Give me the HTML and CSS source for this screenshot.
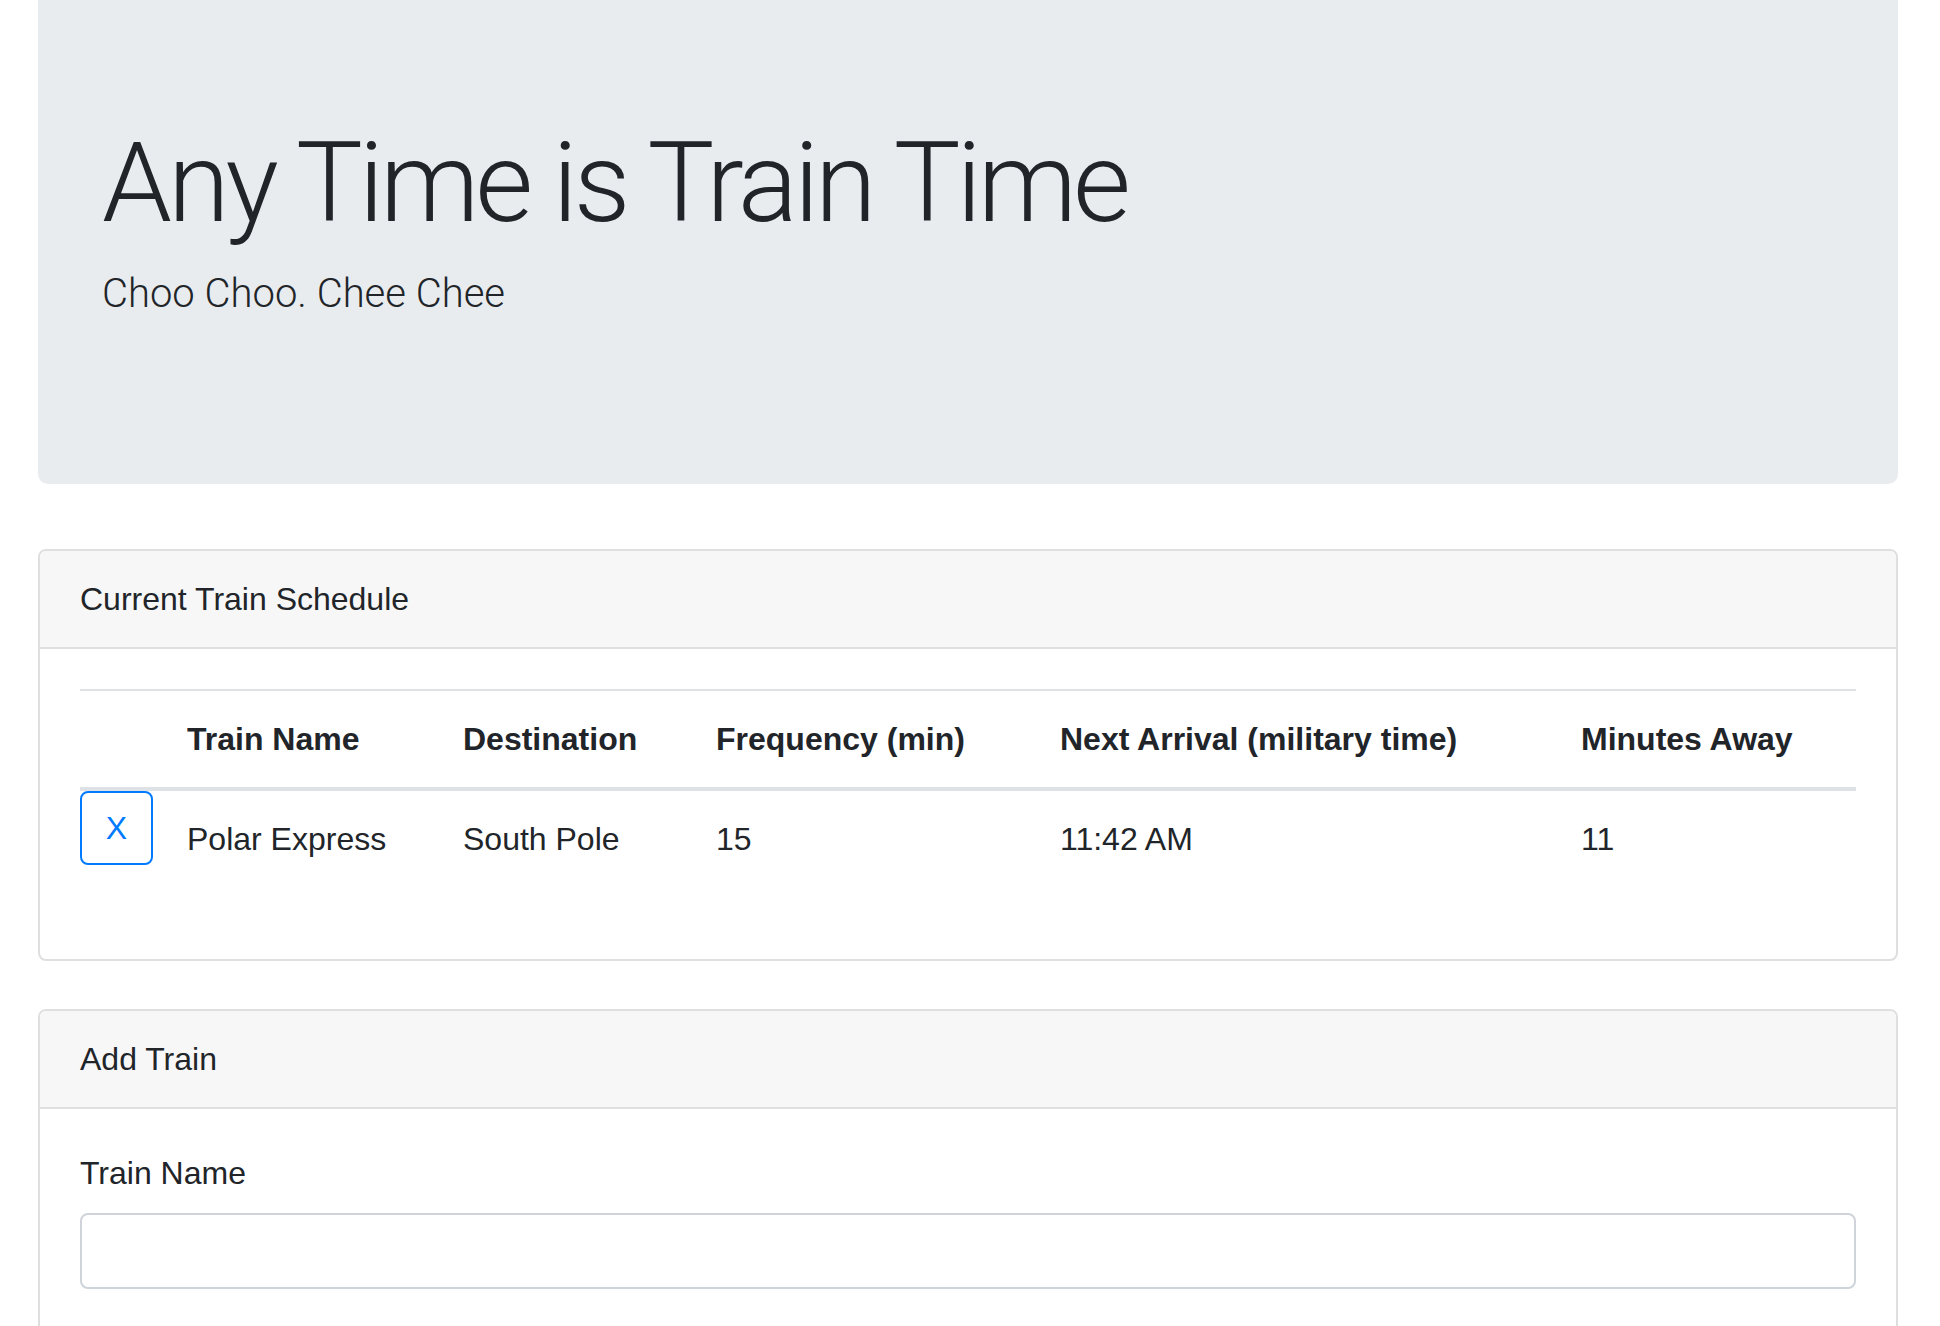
FILE: index.html
```html
<!DOCTYPE html>
<html lang="en">
<head>
<meta charset="utf-8">
<title>Train Scheduler</title>
<link rel="stylesheet" href="styles.css">
</head>
<body>
<div class="container">
  <div class="jumbotron">
    <h1 class="display">Any Time is Train Time</h1>
    <p class="lead">Choo Choo. Chee Chee</p>
  </div>

  <div class="card">
    <div class="card-header">Current Train Schedule</div>
    <div class="card-body">
      <table class="table">
        <colgroup>
          <col class="c1"><col class="c2"><col class="c3"><col class="c4"><col class="c5"><col class="c6">
        </colgroup>
        <thead>
          <tr>
            <th></th>
            <th>Train Name</th>
            <th>Destination</th>
            <th>Frequency (min)</th>
            <th>Next Arrival (military time)</th>
            <th>Minutes Away</th>
          </tr>
        </thead>
        <tbody>
          <tr>
            <td class="btn-cell"><button class="btn-outline" type="button">X</button></td>
            <td>Polar Express</td>
            <td>South Pole</td>
            <td>15</td>
            <td>11:42 AM</td>
            <td>11</td>
          </tr>
        </tbody>
      </table>
    </div>
  </div>

  <div class="card card-add">
    <div class="card-header">Add Train</div>
    <div class="card-body">
      <div class="form-group">
        <label class="form-label" for="train-name">Train Name</label>
        <input class="form-control" id="train-name" type="text">
      </div>
    </div>
  </div>
</div>
</body>
</html>
```

FILE: styles.css
```css
* { box-sizing: border-box; }

html, body {
  margin: 0;
  padding: 0;
  background: #fff;
}

body {
  font-family: "Liberation Sans", Arial, sans-serif;
  font-size: 32px;
  line-height: 48px;
  color: #212529;
}

.container {
  padding: 0 42px 0 38px;
}

.jumbotron {
  background: #e9ecef;
  padding: 116px 64px 128px;
  border-radius: 0 0 10px 10px;
  margin-bottom: 65px;
}

.display {
  font-family: Roboto, "Liberation Sans", sans-serif;
  font-weight: 300;
  font-size: 112px;
  line-height: 134.4px;
  letter-spacing: -4px;
  margin: 0 0 14px;
}

.lead {
  font-family: Roboto, "Liberation Sans", sans-serif;
  font-weight: 300;
  font-size: 40px;
  line-height: 60px;
  letter-spacing: 0;
  margin: 0 0 32px;
}

.card {
  border: 2px solid #dfdfdf;
  border-radius: 8px;
  background: #fff;
  overflow: hidden;
}

.card-add {
  margin-top: 48px;
}

.card-header {
  background: #f7f7f7;
  padding: 24px 40px;
  border-bottom: 2px solid #dfdfdf;
}

.card-body {
  padding: 40px;
}

.table {
  width: 100%;
  border-collapse: collapse;
  table-layout: fixed;
  margin-bottom: 32px;
}

.c1 { width: 83px; }
.c2 { width: 276px; }
.c3 { width: 253px; }
.c4 { width: 344px; }
.c5 { width: 521px; }
.c6 { width: auto; }

.table th {
  text-align: left;
  font-weight: bold;
  padding: 24px;
  vertical-align: bottom;
  border-top: 2px solid #dee2e6;
  border-bottom: 4px solid #dee2e6;
  white-space: nowrap;
}

.table td {
  padding: 24px;
  vertical-align: top;
  white-space: nowrap;
}

.table td.btn-cell {
  padding: 0;
}

.btn-outline {
  display: block;
  width: 73px;
  height: 74px;
  padding: 0;
  border: 2px solid #007bff;
  border-radius: 8px;
  background: transparent;
  color: #007bff;
  font-family: "Liberation Sans", Arial, sans-serif;
  font-size: 32px;
  line-height: 48px;
}

.form-group {
  margin-bottom: 32px;
}

.form-label {
  display: block;
  margin-bottom: 16px;
}

.form-control {
  display: block;
  width: 100%;
  height: 76px;
  padding: 12px 24px;
  border: 2px solid #ced4da;
  border-radius: 8px;
  background: #fff;
  font-family: "Liberation Sans", Arial, sans-serif;
  font-size: 32px;
  color: #495057;
}
```
